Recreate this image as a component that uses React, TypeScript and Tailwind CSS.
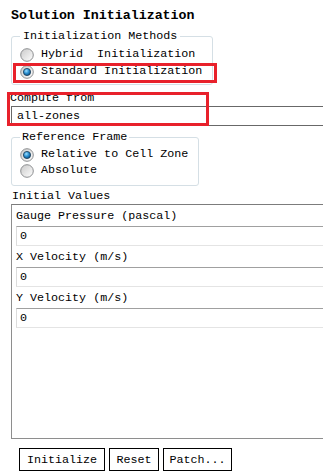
import React from "react";

const Radio: React.FC<{ checked?: boolean }> = ({ checked }) => (
  <svg width="14" height="14" viewBox="0 0 14 14" className="shrink-0">
    <defs>
      <linearGradient id="rg" x1="0" y1="0" x2="1" y2="1">
        <stop offset="0" stopColor="#c9c9c9" />
        <stop offset="1" stopColor="#ffffff" />
      </linearGradient>
      <radialGradient id="bg" cx="0.4" cy="0.35" r="0.7">
        <stop offset="0" stopColor="#9fe0ff" />
        <stop offset="0.5" stopColor="#2a8fd0" />
        <stop offset="1" stopColor="#0a4a7e" />
      </radialGradient>
    </defs>
    <circle cx="7" cy="7" r="6.3" fill="url(#rg)" stroke="#8c8e90" strokeWidth="1" />
    {checked && <circle cx="7" cy="7" r="3.6" fill="url(#bg)" stroke="#1b3b55" strokeWidth="0.8" />}
  </svg>
);

const RadioRow: React.FC<{ label: string; checked?: boolean; h: string }> = ({ label, checked, h }) => (
  <div className={`flex items-center gap-[7px] pl-[8px] ${h}`}>
    <Radio checked={checked} />
    <span className="whitespace-pre">{label}</span>
  </div>
);

const Field: React.FC<{ label: string; value: string }> = ({ label, value }) => (
  <>
    <div className="h-[21px] pl-[4px] pt-[4px] leading-[14px]">{label}</div>
    <div className="ml-[4px] h-[20px] border-t border-l border-b border-t-[#a0a0a0] border-l-[#dcdcdc] border-b-[#e4e4e4] pl-[3px] leading-[18px]">
      {value}
    </div>
  </>
);

export default function App() {
  return (
    <div className="relative w-[323px] h-[473px] overflow-hidden bg-white text-black font-['Liberation_Mono',monospace] text-[11.7px]">
      <div className="pl-[11px] pt-[8px] h-[26px] text-[13.3px] font-bold leading-[16px]">Solution Initialization</div>

      <fieldset className="ml-[11px] mt-[3px] w-[202px] h-[56px] border border-[#d5dfe5] rounded-[3px]">
        <legend className="ml-[8px] px-[3px] leading-[14px]">Initialization Methods</legend>
        <div className="pt-[3px]">
          <RadioRow label="Hybrid  Initialization" h="h-[17px]" />
          <RadioRow label="Standard Initialization" checked h="h-[18px]" />
        </div>
      </fieldset>

      <div className="pl-[10px] mt-[5px] h-[16px] leading-[16px]">Compute from</div>
      <div className="ml-[11px] h-[20px] border-t border-l border-b border-[#686868] pl-[5px] leading-[18px]">all-zones</div>

      <fieldset className="ml-[11px] mt-[4px] w-[188px] h-[56px] border border-[#d5dfe5] rounded-[3px]">
        <legend className="ml-[8px] px-[2px] leading-[14px]">Reference Frame</legend>
        <div className="pt-[3px]">
          <RadioRow label="Relative to Cell Zone" checked h="h-[16px]" />
          <RadioRow label="Absolute" h="h-[16px]" />
        </div>
      </fieldset>

      <div className="pl-[12px] mt-[3px] h-[15px] leading-[14px]">Initial Values</div>
      <div className="ml-[11px] h-[235px] border-t border-l border-b border-t-[#7c7c7c] border-l-[#8e8e8e] border-b-[#8e8e8e]">
        <Field label="Gauge Pressure (pascal)" value="0" />
        <Field label="X Velocity (m/s)" value="0" />
        <Field label="Y Velocity (m/s)" value="0" />
      </div>

      <div className="flex gap-[4px] ml-[19px] mt-[9px]">
        <button className="w-[86px] h-[23px] border border-black bg-white leading-[20px]">Initialize</button>
        <button className="w-[50px] h-[23px] border border-black bg-white leading-[20px]">Reset</button>
        <button className="w-[69px] h-[23px] border border-black bg-white leading-[20px]">Patch...</button>
      </div>

      {/* annotation boxes */}
      <div className="absolute left-[13px] top-[63px] w-[204px] h-[20px] border-[3px] border-[#e8212b]" />
      <div className="absolute left-[7px] top-[92px] w-[202px] h-[34px] border-[3px] border-[#e8212b]" />
    </div>
  );
}
